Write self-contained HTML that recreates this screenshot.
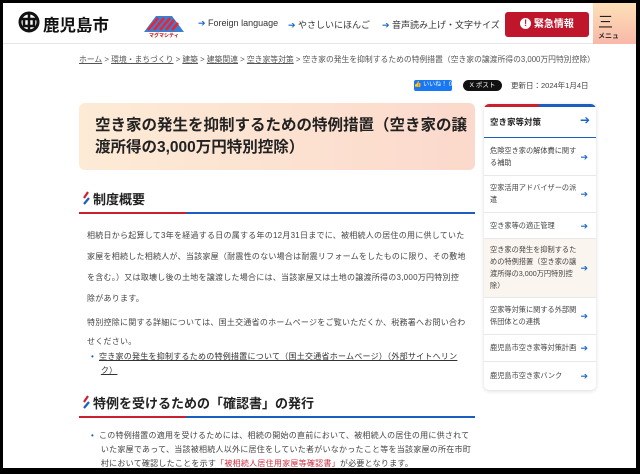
<!DOCTYPE html>
<html><head><meta charset="utf-8">
<style>
*{margin:0;padding:0;box-sizing:border-box}
body{width:640px;height:474px;background:#000;overflow:hidden;font-family:"Liberation Sans","Noto Sans CJK JP",sans-serif;color:#333}
#pg{position:absolute;left:3px;top:3px;width:633px;height:465px;background:#fff;overflow:hidden}
.a{position:absolute;white-space:nowrap}
.hd{position:absolute;left:0;top:0;width:633px;height:41px;border-bottom:1px solid #e6e6e6}
.nav{font-size:9px;color:#333}
.nav b{color:#1a66c8;font-weight:normal}
.p{font-size:8px;color:#444;letter-spacing:.25px}
.h2{font-size:13px;font-weight:bold;color:#222}
.side{position:absolute;left:481px;top:101px;width:112px;height:286px;background:#fff;border-radius:5px;box-shadow:0 1px 4px rgba(0,0,0,.15);overflow:hidden}
.si{position:absolute;left:0;width:112px;border-bottom:1px solid #e8e8e8;font-size:7.2px;color:#444;line-height:12px;padding-left:6px;display:flex;align-items:center}
.si span{width:92px;white-space:normal}
.si i{position:absolute;right:8px;color:#1a66c8;font-style:normal;font-size:9px}
</style></head><body><div id="pg">
<div class="hd"></div>
<svg class="a" style="left:15px;top:8px" width="22" height="22" viewBox="0 0 22 22"><circle cx="11" cy="11" r="9" fill="none" stroke="#111" stroke-width="3"/><path d="M2 8h18M11 3v17M6 8v7h10V8" fill="none" stroke="#111" stroke-width="2.6"/></svg>
<div class="a" style="left:40px;top:9px;font-size:16.5px;font-weight:bold;color:#111">鹿児島市</div>
<svg class="a" style="left:139px;top:11px" width="44" height="18" viewBox="0 0 44 18"><path d="M2 18L14 2h16l12 16z" fill="#3a7fd0"/><path d="M6 16l10-12M12 16l10-12M18 16l10-12M24 16l8-10M30 16l6-7" stroke="#e23" stroke-width="2.5"/></svg>
<div class="a" style="left:146px;top:29px;font-size:5px;font-weight:bold;color:#c00">マグマシティ</div>
<div class="a nav" style="left:195px;top:15px"><b>➔</b> Foreign language</div>
<div class="a nav" style="left:285px;top:15px"><b>➔</b> やさしいにほんご</div>
<div class="a nav" style="left:379px;top:15px"><b>➔</b> 音声読み上げ・文字サイズ</div>
<div class="a" style="left:502px;top:9px;width:84px;height:25px;background:#c0162c;border-radius:3px;color:#fff;font-size:10px;font-weight:bold;line-height:25px;text-align:center"><span style="display:inline-block;width:11px;height:11px;border-radius:50%;background:#fff;color:#c0162c;font-size:9px;line-height:11px;vertical-align:1px">!</span> 緊急情報</div>
<div class="a" style="left:590px;top:0;width:43px;height:41px;background:linear-gradient(#fde0b8,#f9b8a8)"><div style="position:absolute;left:5px;top:8px;font-size:15px;color:#222">三</div><div style="position:absolute;left:5px;top:28px;font-size:7px;font-weight:bold">メニュ</div></div>
<div class="a" style="left:76px;top:51px;font-size:7.8px;color:#555"><u>ホーム</u> &gt; <u>環境・まちづくり</u> &gt; <u>建築</u> &gt; <u>建築関連</u> &gt; <u>空き家等対策</u> &gt; 空き家の発生を抑制するための特例措置（空き家の譲渡所得の3,000万円特別控除）</div>
<div class="a" style="left:411px;top:77px;width:38px;height:11px;background:#1877f2;border-radius:2px;color:#fff;font-size:6px;line-height:11px;text-align:center">👍 いいね！ 0</div>
<div class="a" style="left:460px;top:77px;width:39px;height:11px;background:#111;border-radius:6px;color:#fff;font-size:6.5px;line-height:11px;text-align:center">X ポスト</div>
<div class="a" style="left:508px;top:77px;font-size:7.5px;color:#444">更新日：2024年1月4日</div>
<div class="a" style="left:76px;top:100px;width:396px;height:67px;border-radius:6px;background:linear-gradient(90deg,#fdebd6,#fbd9cc)"></div>
<div class="a" style="left:92px;top:112px;font-size:15.5px;font-weight:bold;color:#222;line-height:22px">空き家の発生を抑制するための特例措置（空き家の譲<br>渡所得の3,000万円特別控除）</div>
<svg class="a" style="left:78px;top:188px" width="10" height="14"><path d="M7 1L3 7" stroke="#d02030" stroke-width="2.2"/><path d="M8 7L3 13" stroke="#1a5fc0" stroke-width="2.2"/></svg>
<div class="a h2" style="left:90px;top:186px">制度概要</div>
<div class="a" style="left:76px;top:209px;width:107px;height:2px;background:#c8202e"></div>
<div class="a" style="left:183px;top:209px;width:289px;height:2px;background:#1a5fc0"></div>
<div class="a p" style="left:84px;top:222px;line-height:21px">相続日から起算して3年を経過する日の属する年の12月31日までに、被相続人の居住の用に供していた<br>家屋を相続した相続人が、当該家屋（耐震性のない場合は耐震リフォームをしたものに限り、その敷地<br>を含む。）又は取壊し後の土地を譲渡した場合には、当該家屋又は土地の譲渡所得の3,000万円特別控<br>除があります。</div>
<div class="a p" style="left:84px;top:310px;line-height:19px">特別控除に関する詳細については、国土交通省のホームページをご覧いただくか、税務署へお問い合わ<br>せください。</div>
<div class="a p" style="left:88px;top:347px;line-height:14px;color:#333"><span style="color:#1a5fc0">•</span>&nbsp; <u>空き家の発生を抑制するための特例措置について（国土交通省ホームページ）（外部サイトへリン</u><br>&nbsp;&nbsp;&nbsp;&nbsp;<u>ク）</u></div>
<svg class="a" style="left:78px;top:392px" width="10" height="14"><path d="M7 1L3 7" stroke="#d02030" stroke-width="2.2"/><path d="M8 7L3 13" stroke="#1a5fc0" stroke-width="2.2"/></svg>
<div class="a h2" style="left:90px;top:390px">特例を受けるための「確認書」の発行</div>
<div class="a" style="left:76px;top:413px;width:107px;height:2px;background:#c8202e"></div>
<div class="a" style="left:183px;top:413px;width:289px;height:2px;background:#1a5fc0"></div>
<div class="a p" style="left:88px;top:426px;line-height:14px"><span style="color:#1a5fc0">•</span>&nbsp; この特例措置の適用を受けるためには、相続の開始の直前において、被相続人の居住の用に供されて<br>&nbsp;&nbsp;&nbsp;&nbsp;いた家屋であって、当該被相続人以外に居住をしていた者がいなかったこと等を当該家屋の所在市町<br>&nbsp;&nbsp;&nbsp;&nbsp;村において確認したことを示す<span style="color:#d03040">「被相続人居住用家屋等確認書」</span>が必要となります。</div>
<div class="side">
<div style="position:absolute;left:0;top:0;width:55px;height:3px;background:#c8202e"></div>
<div style="position:absolute;left:55px;top:0;width:57px;height:3px;background:#1a5fc0"></div>
<div style="position:absolute;left:6px;top:12px;font-size:8.5px;font-weight:bold;color:#222">空き家等対策</div>
<div style="position:absolute;right:6px;top:9px;font-size:12px;color:#1a66c8">➔</div>
<div style="position:absolute;left:0;top:33px;width:112px;height:1px;background:#1a5fc0"></div>
<div class="si" style="top:34px;height:38px"><span>危険空き家の解体費に関する補助</span><i>➔</i></div>
<div class="si" style="top:72px;height:37px"><span>空家活用アドバイザーの派遣</span><i>➔</i></div>
<div class="si" style="top:109px;height:26px"><span>空き家等の適正管理</span><i>➔</i></div>
<div class="si" style="top:135px;height:59px;background:#faf5ee"><span>空き家の発生を抑制するための特例措置（空き家の譲渡所得の3,000万円特別控除）</span><i>➔</i></div>
<div class="si" style="top:194px;height:37px"><span>空家等対策に関する外部関係団体との連携</span><i>➔</i></div>
<div class="si" style="top:231px;height:27px"><span>鹿児島市空き家等対策計画</span><i>➔</i></div>
<div class="si" style="top:258px;height:28px;border:0"><span>鹿児島市空き家バンク</span><i>➔</i></div>
</div>
</div></body></html>
